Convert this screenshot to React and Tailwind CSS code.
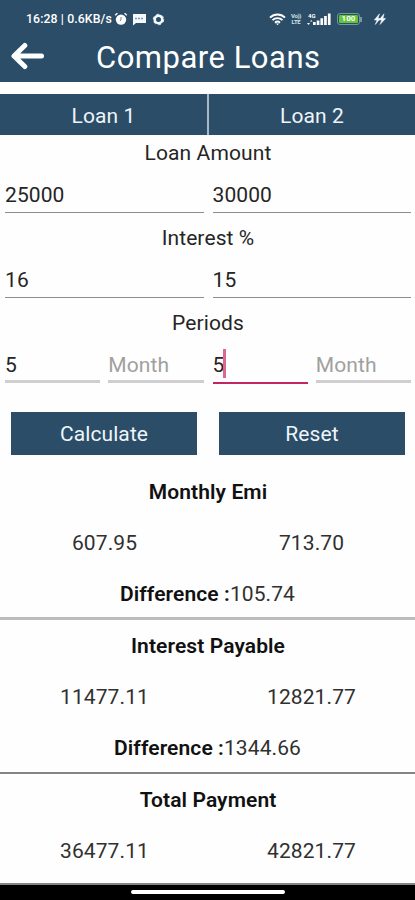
import React from "react";

function StatusBar() {
  return (
    <div className="h-[38px] flex items-center text-white">
      <span className="ml-[26px] w-[87px] text-[12.3px] leading-[14px] font-medium tracking-[0.1px] whitespace-nowrap">16:28 | 0.6KB/s</span>
      <svg className="ml-[1px] w-[14px] h-[14px]" viewBox="0 0 14 14" fill="none">
        <circle cx="7" cy="7.6" r="5.2" fill="#fff" />
        <path d="M1.2 3.2 3.4 1.2M12.8 3.2 10.6 1.2" stroke="#fff" strokeWidth="1.4" />
        <path d="M7 5V8L5.8 9" stroke="#6d8699" strokeWidth="1" />
      </svg>
      <svg className="ml-[4px] w-[15px] h-[13px]" viewBox="0 0 15 13">
        <path d="M1 1h13v9H4l-3 2.6z" fill="#f4f9fd" />
        <path d="M3 5.5h9" stroke="#8299a9" strokeWidth="1.4" strokeDasharray="2 1" />
      </svg>
      <svg className="ml-[5px] w-[13px] h-[13px]" viewBox="0 0 13 13" fill="none" stroke="#f4f9fd">
        <circle cx="6.5" cy="6.5" r="3.8" strokeWidth="2.6" />
        <circle cx="6.5" cy="6.5" r="5.200" strokeWidth="1" strokeDasharray="2.7 2.745" />
      </svg>
      <svg className="ml-[104px] w-[17px] h-[13px]" viewBox="0 0 17 13" fill="none" stroke="#fff" strokeWidth="1.9">
        <path d="M1 4.6C5.2.4 11.8.4 16 4.6M3.5 7.2c2.8-2.8 7.2-2.8 10 0M6 9.7c1.5-1.4 3.5-1.4 5 0" />
        <path d="M7 10.5h3L8.5 12.3z" fill="#fff" stroke="none" />
      </svg>
      <span className="ml-[4px] w-[12px] text-[6px] leading-[6px] font-bold tracking-[-0.3px] text-center text-[#d5e0e8]">Vo))<br />LTE</span>
      <svg className="ml-[4px] w-[25px] h-[14px]" viewBox="0 0 25 14" fill="#fff">
        <text x="2" y="5.5" fontSize="6" fontWeight="700" fontFamily="Roboto, sans-serif">4G</text>
        <path d="M1 11h3l-1.500 2zM4 9.500h2.500L5.200 8zM7 10h2.700v3H7zM10.700 8.500h2.700V13h-2.700zM14.400 6.300h2.700V13h-2.700zM18.100 4h2.700v9h-2.700zM21.900 1.500h2.700V13h-2.700z" />
      </svg>
      <div className="ml-[6px] w-[23px] h-[12px] rounded-[3px] border border-[#7895a6] p-px flex">
        <div className="flex-1 rounded-[1px] bg-[#62c832] text-white text-[8px] leading-[8px] font-bold text-center tracking-[0px]">100</div>
      </div>
      <div className="w-[1.5px] h-[5px] bg-[#7895a6]" />
      <svg className="ml-[12px] w-[12px] h-[12px]" viewBox="0 0 12 12" fill="#f4f9fd">
        <path d="M5.500 .8.300 7h2.700L1.300 11.500l5-6H4zM10 .8 5 7h2.800L6 11.500l5.700-6H9z" stroke="#f4f9fd" strokeWidth=".5" />
      </svg>
    </div>
  );
}

function Header() {
  return (
    <header className="h-[82px] bg-[#2b4d67] shrink-0">
      <StatusBar />
      <div className="h-[38px] flex items-center">
        <svg className="ml-[10px] w-[34px] h-[28px] shrink-0 -mt-[2px]" viewBox="0 0 34 28" fill="none" stroke="#fff" strokeWidth="5">
          <path d="M31.500 14H5M14.800 3.500 4 14l10.800 10.500" strokeLinejoin="round" strokeLinecap="round" />
        </svg>
        <h1 className="ml-[52px] pt-px text-[31px] leading-[38px] tracking-[0.5px] text-white whitespace-nowrap">Compare Loans</h1>
      </div>
    </header>
  );
}

function Label({ children }) {
  return <div className="h-[36px] leading-[36px] pl-px text-center text-[#252525]">{children}</div>;
}

function PairField({ label, left, right }) {
  return (
    <div className="h-[85px]">
      <Label>{label}</Label>
      <div className="flex gap-[9px] pl-[5px] pr-[4px]">
        {[left, right].map((v, i) => (
          <div key={i} className="flex-1 h-[42px] leading-[48px] border-b border-[#8d8d8d]">{v}</div>
        ))}
      </div>
    </div>
  );
}

function Periods() {
  return (
    <div className="h-[107px]">
      <Label>Periods</Label>
      <div className="flex gap-[9px] pl-[5px] pr-[4px] leading-[48px]">
        <div className="flex-1 flex gap-[8px]">
          <div className="flex-1 h-[42px] border-b-[3px] border-[#cfcfcf]">5</div>
          <div className="flex-1 h-[42px] border-b-[3px] border-[#cfcfcf] text-[#a0a0a0]">Month</div>
        </div>
        <div className="flex-1 flex gap-[8px]">
          <div className="flex-1 h-[43px] border-b-2 border-[#c22660] flex">
            5<span className="w-[3px] h-[29px] mt-[8px] -ml-px bg-[#dd6890]" />
          </div>
          <div className="flex-1 h-[42px] border-b-[3px] border-[#cfcfcf] text-[#a0a0a0]">Month</div>
        </div>
      </div>
    </div>
  );
}

function Values({ a, b }) {
  return (
    <div className="grid grid-cols-2 h-[52px] leading-[53px] pl-px text-center text-[#303030]">
      <div>{a}</div>
      <div>{b}</div>
    </div>
  );
}

function Result({ title, a, b, diff, line }) {
  return (
    <section className={`h-[154px] ${line}`}>
      <h2 className="h-[51px] leading-[52px] pl-px text-center font-semibold text-[#111] tracking-[0.1px]">{title}</h2>
      <Values a={a} b={b} />
      <div className="h-[48px] leading-[51px] text-center text-[#303030]">
        <b className="font-semibold text-[#111] tracking-[0.1px]">Difference :</b>{diff}
      </div>
    </section>
  );
}

export default function App() {
  return (
    <div className="w-[415px] h-[900px] bg-[#fefefe] flex flex-col overflow-hidden font-[Roboto,sans-serif] text-[21px] tracking-[0.1px] text-[#252525]">
      <Header />
      <div className="mt-[12px] h-[41px] grid grid-cols-[207px_206px] grid-rows-[41px] gap-[2px] bg-[#a9b8c3] text-[#eef5fa] text-center leading-[44px] shrink-0">
        <div className="bg-[#2b4d67]">Loan 1</div>
        <div className="bg-[#2b4d67]">Loan 2</div>
      </div>
      <PairField label="Loan Amount" left="25000" right="30000" />
      <PairField label="Interest %" left="16" right="15" />
      <Periods />
      <div className="h-[43px] flex gap-[22px] pl-[11px] pr-[10px] text-center leading-[45px] text-[#eef5fa]">
        <div className="flex-1 bg-[#2b4d67]">Calculate</div>
        <div className="flex-1 bg-[#2b4d67]">Reset</div>
      </div>
      <div className="mt-[11px]">
        <Result title="Monthly Emi" a="607.95" b="713.70" diff="105.74" line="border-b-[3px] border-[#bcbcbc]" />
        <Result title="Interest Payable" a="11477.11" b="12821.77" diff="1344.66" line="border-b-2 border-[#858585]" />
        <section className="h-[111px] border-b-2 border-[#858585]">
          <h2 className="h-[51px] leading-[52px] pl-px text-center font-semibold text-[#111] tracking-[0.1px]">Total Payment</h2>
          <Values a="36477.11" b="42821.77" />
        </section>
      </div>
      <footer className="flex-1 bg-black flex justify-center pt-[5px]">
        <div className="w-[154px] h-[4px] rounded-full bg-white" />
      </footer>
    </div>
  );
}
